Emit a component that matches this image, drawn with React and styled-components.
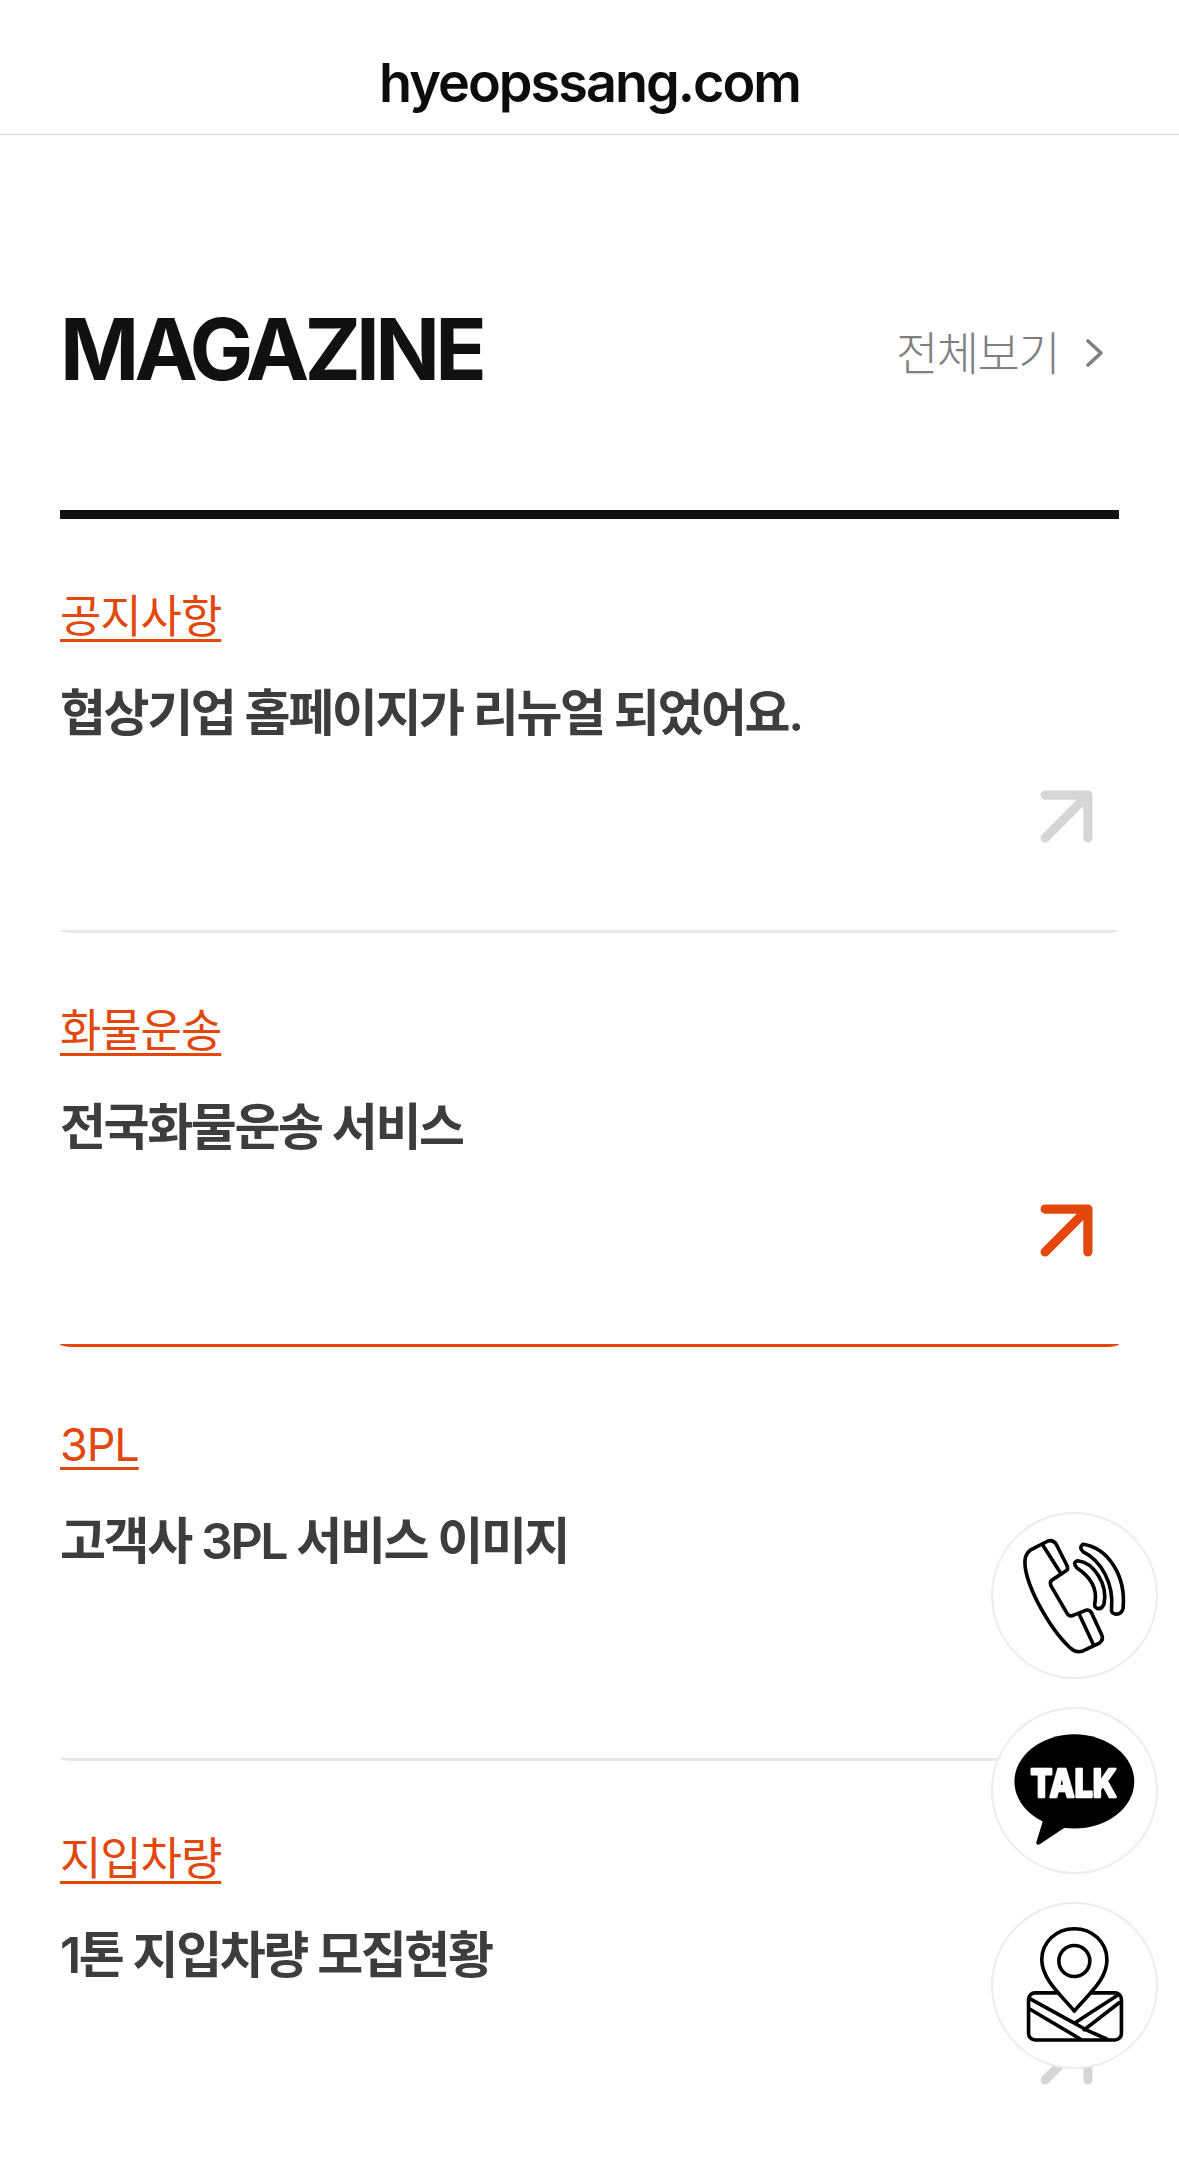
import React from "react";
import styled, { createGlobalStyle } from "styled-components";

const Global = createGlobalStyle`
html, body { margin:0; padding:0; background:#fff; overflow:hidden; }
body { font-family:"Inter","Noto Sans CJK KR",sans-serif; }
* { box-sizing:border-box; }
`;

const Page = styled.div`
width:1179px;
height:2171px;
overflow:hidden;
`;

const TopBar = styled.header`
height:135px;
padding-top:30px;
display:flex;
align-items:center;
justify-content:center;
border-bottom:1.5px solid #d4d4d4;
font-size:54px;
font-weight:600;
letter-spacing:-2px;
color:#0c0c0c;
`;

const Section = styled.section`
padding:0 60px;
`;

const Head = styled.div`
height:384px;
padding:165px 0 0;
display:flex;
align-items:flex-start;
justify-content:space-between;
border-bottom:9px solid #111;
`;

const Title = styled.h1`
margin:0;
font-size:85px;
line-height:100px;
font-weight:700;
letter-spacing:-4.8px;
color:#111;
`;

const More = styled.a`
display:flex;
align-items:center;
height:100px;
padding-right:14px;
gap:26px;
font-size:46px;
font-weight:300;
letter-spacing:-1.6px;
color:#7f7f7f;
svg { margin-top:5px; }
`;

const Item = styled.article`
height:414px;
padding-top:67px;
border-bottom:3px solid ${p => (p.$active ? "#e2470c" : "#e8e8e8")};
border-radius:0 0 12px 12px / 0 0 3px 3px;
display:flex;
flex-direction:column;
align-items:flex-start;
`;

const Category = styled.span`
font-size:45px;
line-height:62px;
font-weight:400;
letter-spacing:-1.1px;
color:#e2470c;
text-decoration:underline;
text-decoration-thickness:3px;
text-underline-offset:6px;
`;

const Headline = styled.p`
margin:33px 0 0;
font-size:50px;
line-height:64px;
font-weight:600;
letter-spacing:-2.4px;
color:#3d3d3d;
`;

const ArrowBox = styled.div`
align-self:flex-end;
margin-top:auto;
margin-right:26px;
margin-bottom:87px;
width:53px;
height:53px;
`;

const Floating = styled.aside`
position:fixed;
right:21px;
bottom:102px;
display:flex;
flex-direction:column;
gap:28px;
`;

const RoundButton = styled.button`
width:167px;
height:167px;
padding:0;
border:2px solid #ececec;
border-radius:50%;
background:#fff;
display:block;
overflow:hidden;
svg { display:block; width:100%; height:100%; }
`;

const Arrow = ({ color }) => (
  <svg width="53" height="53" viewBox="0 0 52 52" fill="none" stroke={color} strokeWidth="9" strokeLinecap="round" strokeLinejoin="round">
    <path d="M5 5H47V47M5 47L47 5" />
  </svg>
);

const Chevron = () => (
  <svg width="20" height="30" viewBox="0 0 20 30" fill="none" stroke="#7f7f7f" strokeWidth="3.6" strokeLinecap="round" strokeLinejoin="round">
    <path d="M3 3L16 15L3 27" />
  </svg>
);

const PhoneIcon = () => (
  <svg viewBox="95 98 495 495" fill="none" stroke="#000" strokeWidth="11" strokeLinejoin="round" strokeLinecap="round">
    <path d="M208 208L262 180Q278 175 287 190L320 255Q325 266 315 272L275 298Q265 305 272 318L320 400Q327 412 340 405L378 390Q388 388 394 398L425 465Q432 480 418 490L365 515Q345 520 330 505Q280 460 230 365Q190 285 192 240Q193 220 208 208Z" />
    <path d="M248 195L302 280M358 405L400 495" />
    <path d="M368 190C440 200 500 280 490 385Q485 403 468 402Q452 400 455 385C462 310 425 240 368 212Q355 200 368 190Z" />
    <path d="M352 240C400 245 445 310 432 372Q425 388 412 385Q400 380 405 365C412 320 385 285 350 262Q335 245 352 240Z" />
  </svg>
);

const TalkIcon = () => (
  <svg viewBox="95 55 495 495">
    <ellipse cx="342" cy="275" rx="182" ry="143" fill="#000" />
    <path d="M248 390L226 462Q228 470 238 465L318 412Z" fill="#000" />
    <text x="340" y="322" textAnchor="middle" fontFamily="Inter" fontWeight="800" fontSize="118" fill="#fff" stroke="#fff" strokeWidth="7" strokeLinejoin="round" textLength="262" lengthAdjust="spacingAndGlyphs">TALK</text>
  </svg>
);

const MapIcon = () => (
  <svg viewBox="95 640 495 495" fill="none" stroke="#000" strokeWidth="11" strokeLinejoin="round" strokeLinecap="round">
    <rect x="203" y="910" width="282" height="143" rx="20" fill="#fff" />
    <path d="M208 928L342 1002L472 918M205 958L360 1050M342 1002L378 1022L440 1050M372 1022L478 940" />
    <path d="M342 965C300 915 245 870 243 810C243 755 288 715 342 715C396 715 441 755 441 810C441 870 384 915 342 965Z" fill="#fff" />
    <circle cx="342" cy="813" r="47" />
  </svg>
);

const items = [
  { category: "공지사항", text: "협상기업 홈페이지가 리뉴얼 되었어요." },
  { category: "화물운송", text: "전국화물운송 서비스", active: true },
  { category: "3PL", text: "고객사 3PL 서비스 이미지" },
  { category: "지입차량", text: "1톤 지입차량 모집현황" },
];

export default function App() {
  return (
    <Page>
      <Global />
      <TopBar>hyeopssang.com</TopBar>
      <Section>
        <Head>
          <Title>MAGAZINE</Title>
          <More>전체보기 <Chevron /></More>
        </Head>
        {items.map(item => (
          <Item key={item.category} $active={item.active}>
            <Category>{item.category}</Category>
            <Headline>{item.text}</Headline>
            <ArrowBox><Arrow color={item.active ? "#e2470c" : "#d6d6d6"} /></ArrowBox>
          </Item>
        ))}
      </Section>
      <Floating>
        <RoundButton aria-label="전화"><PhoneIcon /></RoundButton>
        <RoundButton aria-label="카카오톡"><TalkIcon /></RoundButton>
        <RoundButton aria-label="지도"><MapIcon /></RoundButton>
      </Floating>
    </Page>
  );
}
